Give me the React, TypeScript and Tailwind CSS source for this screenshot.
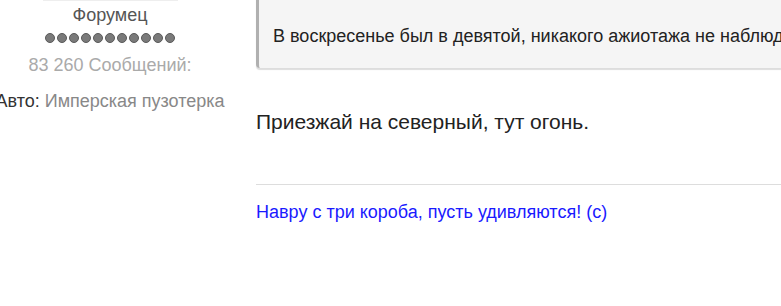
export default function App() {
  const dots = Array.from({ length: 11 });

  return (
    <div className="w-[781px] h-[306px] overflow-hidden bg-white font-['Liberation_Sans',Arial,sans-serif]">
      <div className="flex">
        {/* Автор */}
        <div className="w-[220px] shrink-0 flex flex-col items-center text-center">
          <div className="w-[135px] h-px bg-[#eee]" />
          <div className="mt-[4px] text-[18px] leading-[20px] text-[#555]">Форумец</div>
          <div className="mt-[8px] flex gap-[2px]">
            {dots.map((_, i) => (
              <span key={i} className="w-[10px] h-[10px] rounded-full bg-[#7a7a7a] border border-[#5a5a5a]" />
            ))}
          </div>
          <div className="mt-[12px] text-[18px] leading-[20px] text-[#aaa]">83 260 Сообщений:</div>
          <div className="mt-[16px] text-[18px] leading-[20px] whitespace-nowrap">
            <span className="text-[#333]">Авто: </span>
            <span className="text-[#888]">Имперская пузотерка</span>
          </div>
        </div>

        {/* Сообщение */}
        <div className="ml-[36px] flex-1 min-w-0">
          <div className="-mt-[20px] h-[88px] bg-[#f5f5f5] border-l-[3px] border-[#b0b0b0] rounded-bl-[4px] shadow-[0_2px_1px_#ddd] pl-[14px] pt-[45px] whitespace-nowrap overflow-hidden">
            <span className="text-[18px] leading-[20px] text-[#222]">
              В воскресенье был в девятой, никакого ажиотажа не наблюдалось.
            </span>
          </div>
          <div className="mt-[42px] text-[21px] leading-[24px] text-[#222]">Приезжай на северный, тут огонь.</div>
          <div className="mt-[50px] h-px bg-[#ddd]" />
          <div className="mt-[17px] text-[18px] leading-[20px] text-[#1a1aff]">Навру с три короба, пусть удивляются! (с)</div>
        </div>
      </div>
    </div>
  );
}
